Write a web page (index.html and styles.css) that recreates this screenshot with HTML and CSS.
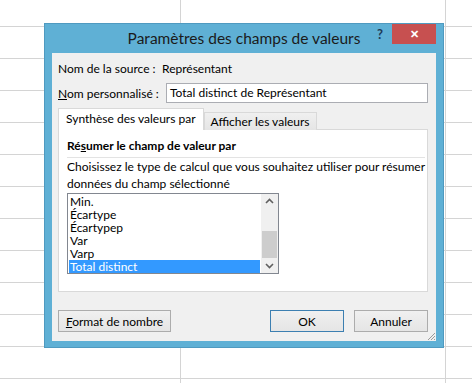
FILE: index.html
```html
<!DOCTYPE html>
<html lang="fr">

<head>
    <meta charset="UTF-8">
    <title>Paramètres des champs de valeurs</title>
    <link rel="stylesheet" href="styles.css">
</head>

<body>
    <div class="sheet"></div>

    <div class="dialog">
        <div class="titlebar">
            <span class="title">Paramètres des champs de valeurs</span>
            <span class="help">?</span>
            <span class="close">&#x2715;</span>
        </div>

        <div class="client">
            <div class="row source">
                <span class="label">Nom de la source :</span>
                <span>Représentant</span>
            </div>
            <div class="row custom">
                <span class="label"><u>N</u>om personnalisé :</span>
                <div class="input">Total distinct de Représentant</div>
            </div>

            <div class="tabs">
                <div class="tab active">Synthèse des valeurs par</div>
                <div class="tab">Afficher les valeurs</div>
            </div>
            <div class="panel">
                <div class="group-title">Ré<u>s</u>umer le champ de valeur par</div>
                <p class="hint">Choisissez le type de calcul que vous souhaitez utiliser pour résumer<br>données du champ sélectionné</p>
                <div class="listbox">
                    <ul class="items">
                        <li>Min.</li>
                        <li>Écartype</li>
                        <li>Écartypep</li>
                        <li>Var</li>
                        <li>Varp</li>
                        <li class="selected">Total distinct</li>
                    </ul>
                    <div class="scrollbar">
                        <svg class="arrow" width="17" height="14" viewBox="0 0 17 14">
                            <path d="M5 9 L8.5 5.5 L12 9" fill="none" stroke="#606060" stroke-width="1.6" />
                        </svg>
                        <div class="track"><div class="thumb"></div></div>
                        <svg class="arrow" width="17" height="14" viewBox="0 0 17 14">
                            <path d="M5 5 L8.5 8.5 L12 5" fill="none" stroke="#606060" stroke-width="1.6" />
                        </svg>
                    </div>
                </div>
            </div>

            <div class="buttons">
                <button class="btn"><u>F</u>ormat de nombre</button>
                <span class="spacer"></span>
                <button class="btn default">OK</button>
                <button class="btn">Annuler</button>
            </div>
            <svg class="grip" width="10" height="10" viewBox="0 0 10 10">
                <path d="M9 2 L2 9 M9 5 L5 9 M9 8 L8 9" stroke="#9a9a9a" stroke-width="1" />
            </svg>
        </div>
    </div>
</body>

</html>
```

FILE: styles.css
```css
body {
    margin: 0;
    width: 472px;
    height: 383px;
    overflow: hidden;
    background: #ffffff;
    font-family: Lato, "Liberation Sans", sans-serif;
    font-size: 12px;
    color: #000000;
    white-space: nowrap;
}

/* grille du tableur derrière la boîte de dialogue */
.sheet {
    width: 472px;
    height: 383px;
    background:
        linear-gradient(#d4d4d4, #d4d4d4) 180px 0 / 1px 100% no-repeat,
        linear-gradient(#d4d4d4, #d4d4d4) 445px 0 / 1px 100% no-repeat,
        repeating-linear-gradient(to bottom, transparent 0, transparent 29px, #d4d4d4 29px, #d4d4d4 30px, transparent 30px, transparent 32px);
    background-position: 180px 0, 445px 0, 0 -3px;
}

.dialog {
    position: absolute;
    left: 44px;
    top: 23px;
    width: 398px;
    height: 323px;
    border: 1px solid #4f9ac0;
    background: #5fb0d5;
    display: flex;
    flex-direction: column;
}

.titlebar {
    height: 29px;
    position: relative;
}

.title {
    position: absolute;
    left: 0;
    right: 0;
    top: 5px;
    text-align: center;
    font-size: 15.5px;
    color: #1b1b1b;
}

.help {
    position: absolute;
    right: 60px;
    top: 2px;
    font-weight: 700;
    font-size: 13px;
    color: #1e3a55;
}

.close {
    position: absolute;
    right: 7px;
    top: 0;
    width: 44px;
    height: 20px;
    background: #c75050;
    color: #ffffff;
    font-size: 11px;
    font-weight: 700;
    text-align: center;
    line-height: 20px;
}

.client {
    margin: 0 7px 6px 7px;
    flex: 1;
    background: #f0f0f0;
    padding: 0 8px 0 6px;
    position: relative;
}

.row {
    display: flex;
    align-items: center;
}

.row.source {
    height: 29px;
    padding-top: 1px;
}

.row.source .label {
    width: 104px;
}

.row.custom {
    height: 20px;
}

.row.custom .label {
    width: 108px;
}

.input {
    flex: 1;
    height: 18px;
    line-height: 18px;
    border: 1px solid #abadb3;
    background: #ffffff;
    padding-left: 3px;
}

.tabs {
    display: flex;
    align-items: flex-end;
    margin-top: 6px;
    height: 21px;
    position: relative;
    z-index: 1;
}

.tab {
    height: 17px;
    line-height: 17px;
    padding: 0 6px;
    border: 1px solid #d9d9d9;
    border-bottom: none;
    background: linear-gradient(#f0f0f0, #e5e5e5);
}

.tab.active {
    height: 21px;
    line-height: 20px;
    padding: 0 7px;
    background: #ffffff;
    border-color: #d9d9d9;
}

.panel {
    height: 161px;
    border: 1px solid #d9d9d9;
    background: #ffffff;
    margin-top: -1px;
    padding: 0 2px 0 8px;
}

.group-title {
    font-weight: 700;
    height: 23px;
    line-height: 24px;
    border-bottom: 1px solid #e3e3e3;
    padding-top: 4px;
}

.hint {
    margin: 0;
    line-height: 17px;
}

.listbox {
    display: flex;
    width: 210px;
    height: 79px;
    border: 1px solid #828790;
    margin-top: 1px;
}

.items {
    flex: 1;
    list-style: none;
    margin: 0;
    padding: 1px 1px 0 1px;
}

.items li {
    height: 13px;
    line-height: 13px;
    padding-left: 1px;
}

.items li.selected {
    background: #3399ff;
    color: #ffffff;
}

.scrollbar {
    width: 17px;
    background: #f0f0f0;
    display: flex;
    flex-direction: column;
}

.arrow {
    display: block;
    height: 14px;
}

.track {
    flex: 1;
    display: flex;
    flex-direction: column;
    justify-content: flex-end;
    padding-bottom: 1px;
}

.thumb {
    height: 27px;
    margin: 0 1px;
    background: #cdcdcd;
}

.buttons {
    display: flex;
    gap: 10px;
    margin-top: 18px;
}

.spacer {
    flex: 1;
}

.btn {
    height: 22px;
    width: 74px;
    border: 1px solid #acacac;
    background: linear-gradient(#f0f0f0, #e5e5e5);
    font-family: inherit;
    font-size: 12px;
    color: #000000;
    padding: 0;
}

.btn:first-child {
    width: 113px;
}

.btn.default {
    border-color: #3c7fb1;
}

.grip {
    position: absolute;
    right: 0;
    bottom: 0;
}
```
